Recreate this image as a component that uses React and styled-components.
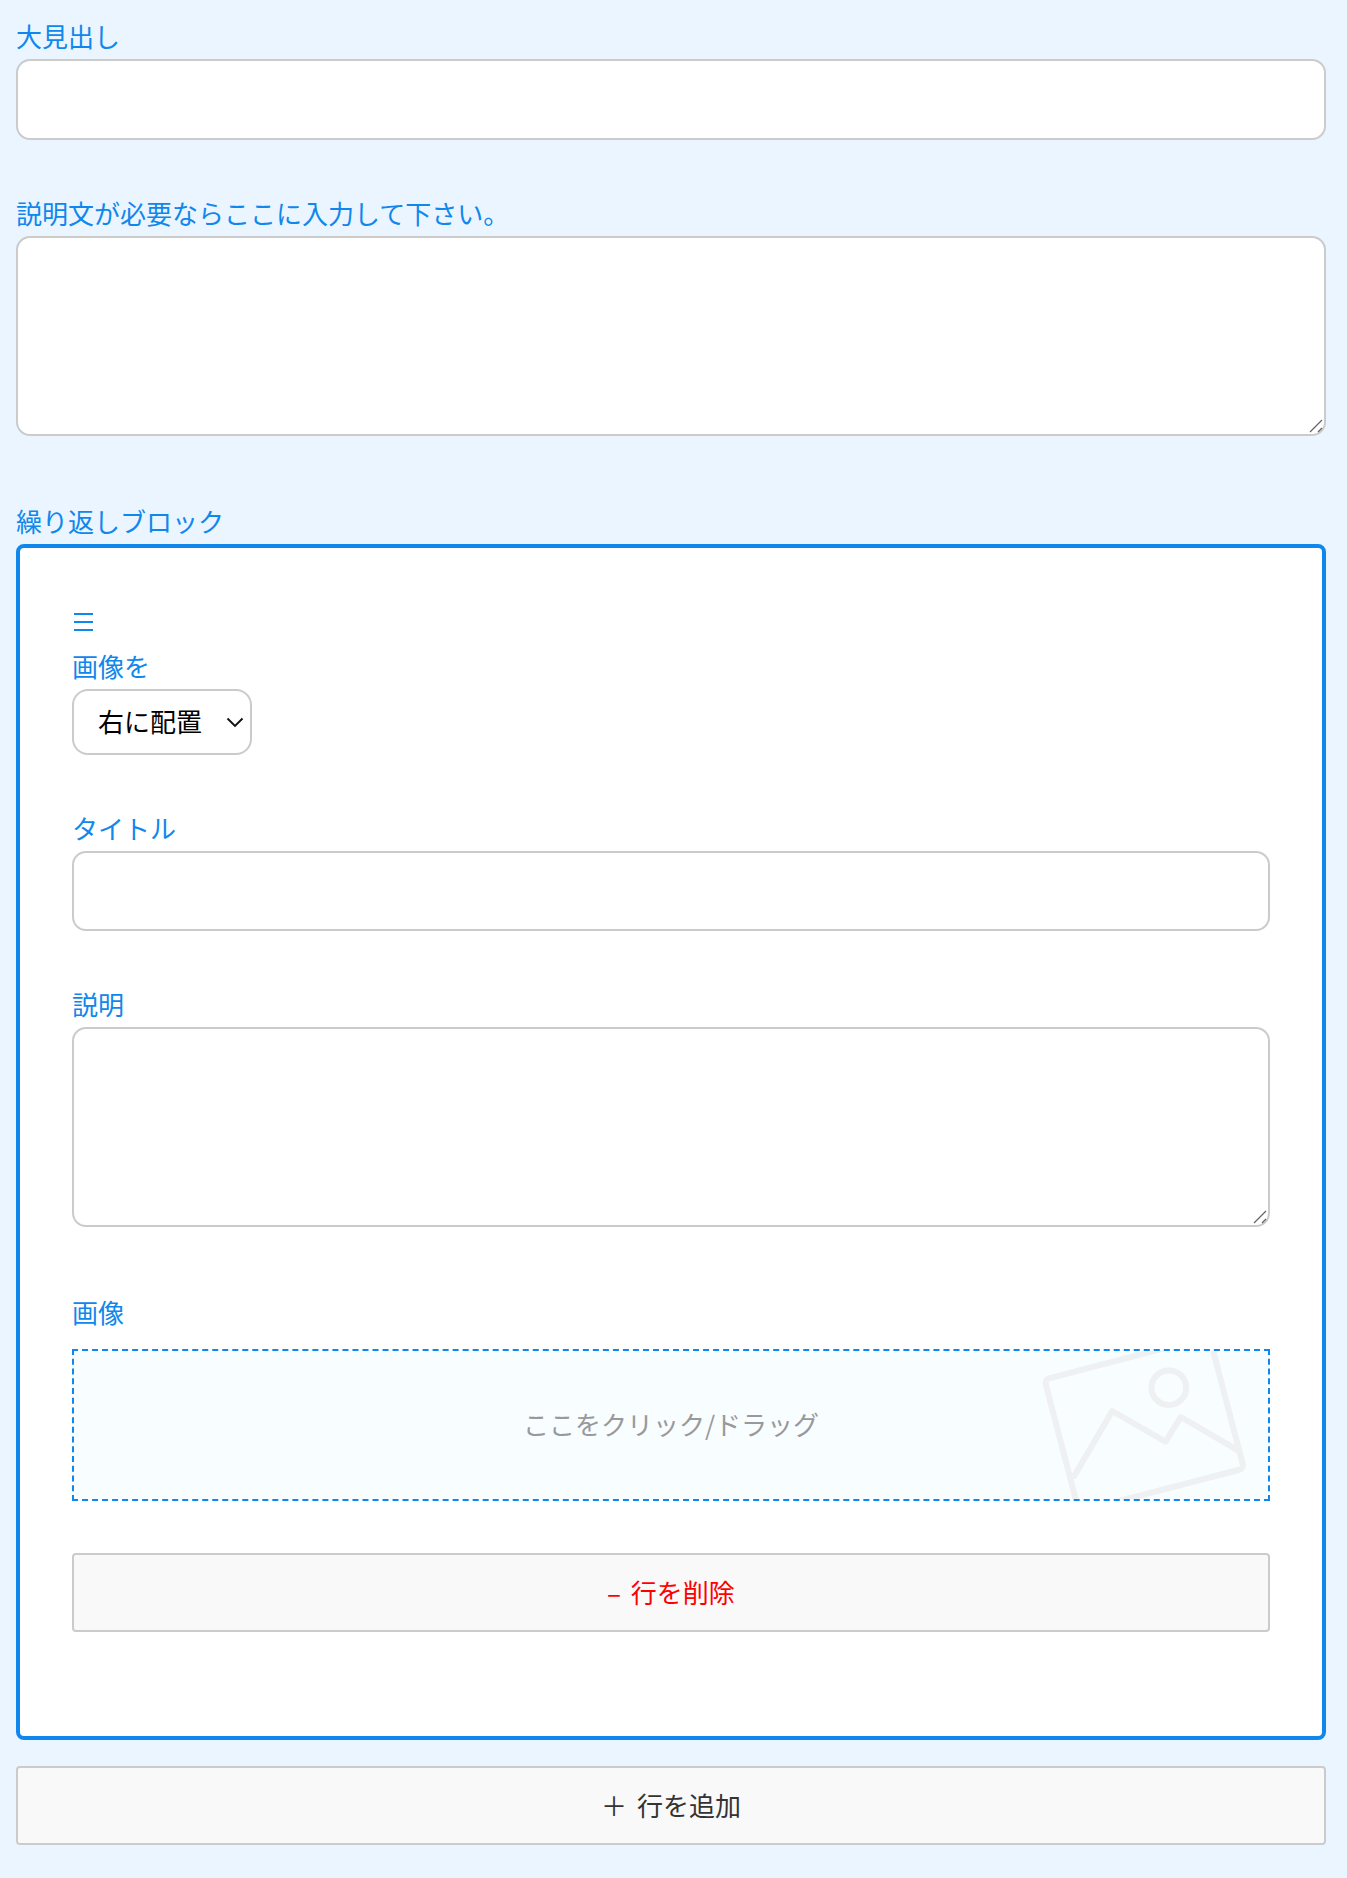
import { createGlobalStyle } from "styled-components";
import styled from "styled-components";

const blue = "#0f87ec";
const line = "#cbcbcb";

const GlobalStyle = createGlobalStyle`
  * {
    box-sizing: border-box;
  }
  body {
    margin: 0;
    background: #eaf5ff;
    font-family: "Noto Sans CJK JP", "Noto Sans", sans-serif;
  }
`;

const Page = styled.div`
  padding: 21px 21px 33px 16px;
`;

const Field = styled.div`
  margin-bottom: ${(props) => props.$after || 58}px;
`;

const Label = styled.label`
  display: block;
  height: 32px;
  margin-bottom: ${(props) => props.$gap || 6}px;
  color: ${blue};
  font-size: 26px;
  line-height: 30px;
`;

const TextInput = styled.input`
  display: block;
  width: 100%;
  height: ${(props) => props.$height || 80}px;
  padding: 0 24px;
  border: 2px solid ${line};
  border-radius: 14px;
  background: #fff;
  font-size: 26px;
  font-family: inherit;
  outline: none;
`;

const AreaWrap = styled.div`
  position: relative;
`;

const TextArea = styled.textarea`
  display: block;
  width: 100%;
  height: 200px;
  padding: 24px;
  border: 2px solid ${line};
  border-radius: 14px;
  background: #fff;
  font-size: 26px;
  font-family: inherit;
  resize: none;
  outline: none;
`;

const Grip = styled.svg`
  position: absolute;
  right: 3px;
  bottom: 3px;
  width: 14px;
  height: 14px;
  pointer-events: none;
`;

const Block = styled.div`
  margin-bottom: 26px;
  padding: 65px 52px 104px;
  border: 4px solid ${blue};
  border-radius: 8px;
  background: #fff;
`;

const Handle = styled.svg`
  display: block;
  width: 22px;
  height: 20px;
  margin-bottom: 18px;
  color: ${blue};
`;

const SelectWrap = styled.div`
  position: relative;
  width: 180px;
  height: 66px;
`;

const Select = styled.select`
  display: block;
  width: 100%;
  height: 100%;
  padding: 0 0 3px 24px;
  border: 2px solid ${line};
  border-radius: 16px;
  background: #fff;
  color: #000;
  font-size: 26px;
  font-family: inherit;
  appearance: none;
  outline: none;
`;

const Chevron = styled.svg`
  position: absolute;
  top: 28px;
  right: 8px;
  width: 18px;
  height: 11px;
  pointer-events: none;
`;

const DropZone = styled.div`
  position: relative;
  display: flex;
  align-items: center;
  justify-content: center;
  height: 152px;
  margin-bottom: 52px;
  padding-bottom: 3px;
  overflow: hidden;
  border: 2px dashed ${blue};
  background: #f8fdff;
  color: #999;
  font-size: 26px;
`;

const Picture = styled.svg`
  position: absolute;
  top: 0;
  right: 0;
  width: 233px;
  height: 150px;
`;

const RowButton = styled.button`
  display: block;
  width: 100%;
  height: 79px;
  padding: 0 0 3px;
  border: 2px solid ${line};
  border-radius: 4px;
  background: #f9f9f9;
  color: ${(props) => props.$color || "#333"};
  font-size: 26px;
  font-family: inherit;
  word-spacing: 4px;
`;

function Area() {
  return (
    <AreaWrap>
      <TextArea />
      <Grip viewBox="0 0 14 14">
        <path d="M1 13L13 1M9 13l4-4" stroke="#666" strokeWidth="1.3" fill="none" />
      </Grip>
    </AreaWrap>
  );
}

export default function App() {
  return (
    <Page>
      <GlobalStyle />
      <Field>
        <Label>大見出し</Label>
        <TextInput $height={81} />
      </Field>
      <Field $after={70}>
        <Label>説明文が必要ならここに入力して下さい。</Label>
        <Area />
      </Field>
      <Label>繰り返しブロック</Label>
      <Block>
        <Handle viewBox="0 0 22 20">
          <path d="M2 1h19M2 9h19M2 17h19" stroke="currentColor" strokeWidth="2" fill="none" />
        </Handle>
        <Field>
          <Label>画像を</Label>
          <SelectWrap>
            <Select defaultValue="right">
              <option value="right">右に配置</option>
              <option value="left">左に配置</option>
            </Select>
            <Chevron viewBox="0 0 18 11">
              <path d="M1.5 1.5L9 9l7.5-7.5" stroke="#111" strokeWidth="1.9" fill="none" />
            </Chevron>
          </SelectWrap>
        </Field>
        <Field>
          <Label>タイトル</Label>
          <TextInput />
        </Field>
        <Field $after={70}>
          <Label>説明</Label>
          <Area />
        </Field>
        <Label $gap={20}>画像</Label>
        <DropZone>
          <Picture viewBox="100 90 700 450" fill="none" stroke="#eef0f2" strokeWidth="18" strokeLinejoin="round" strokeLinecap="round">
            <rect x="172" y="104" width="512" height="410" rx="14" transform="rotate(-14.6 428 309)" />
            <path d="M218 465L332 270L492 362L538 288L710 388" />
            <circle cx="502" cy="200" r="52" />
          </Picture>
          ここをクリック/ドラッグ
        </DropZone>
        <RowButton type="button" $color="#f00">– 行を削除</RowButton>
      </Block>
      <RowButton type="button">＋ 行を追加</RowButton>
    </Page>
  );
}
